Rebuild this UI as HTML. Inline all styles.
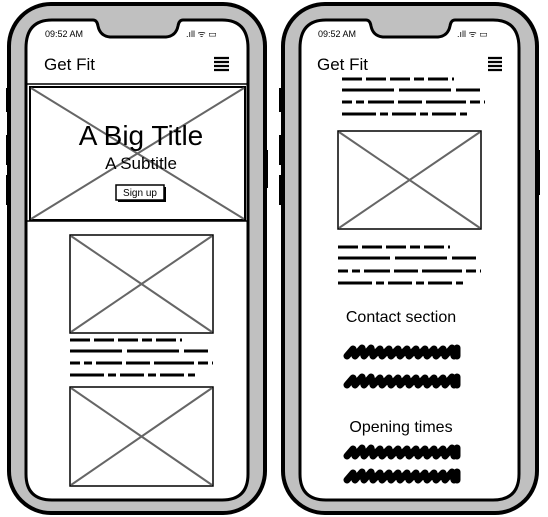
<!DOCTYPE html>
<html><head><meta charset="utf-8"><style>
html,body{margin:0;padding:0;background:#fff;width:548px;height:517px;overflow:hidden}
svg{display:block}
text{font-family:"Liberation Sans",sans-serif;fill:#000}
</style></head><body>
<svg width="548" height="517" viewBox="0 0 548 517" xmlns="http://www.w3.org/2000/svg">
<defs>
<path id="s1" d="M0 0 h112" stroke="#000" stroke-width="3" stroke-dasharray="20 4 20 4 20 4 10 4 20 4" fill="none"/>
<path id="s2" d="M0 0 h143" stroke="#000" stroke-width="3" stroke-dasharray="52 5 52 5 24 5" fill="none"/>
<path id="s3" d="M0 0 h143" stroke="#000" stroke-width="3" stroke-dasharray="10 4 8 4 26 4 24 4 40 4" fill="none"/>
<path id="s4" d="M0 0 h125" stroke="#000" stroke-width="3" stroke-dasharray="34 4 8 4 24 4 8 4 24 4" fill="none"/>
<g id="heavy">
<path d="M2 6 L8 -1 L10 6 L17 -2 L19 6 L26 -2 L28 6 L35 -1 L37 6 L44 -1 L46 6 L53 -1 L55 6 L62 -1 L64 6 L71 -1 L73 6 L80 -1 L82 6 L89 -1 L91 6 L98 -1 L100 6 L107 -2 L109 6 L112 -2 L112 6" stroke="#000" stroke-width="7" stroke-linejoin="round" stroke-linecap="round" fill="none"/>
</g>
</defs>

<!-- LEFT PHONE -->
<rect x="6" y="88" width="5" height="24" fill="#000"/>
<rect x="6" y="135" width="5" height="30" fill="#000"/>
<rect x="6" y="175" width="5" height="30" fill="#000"/>
<rect x="263" y="150" width="5" height="38" fill="#000"/>
<rect x="9" y="4" width="256" height="509" rx="42" fill="#c0c0c0" stroke="#000" stroke-width="4"/>
<path d="M52 20 H93 q4 0 5 6 q2 10 12 11 H166 q10 -1 12 -11 q1 -6 5 -6 H222 q26 0 26 28 V474 q0 26 -26 26 H52 q-26 0 -26 -26 V48 q0 -28 26 -28 Z" fill="#fff" stroke="#000" stroke-width="3"/>
<text x="45" y="37" font-size="9">09:52 AM</text>
<text x="186" y="37" font-size="9">.ıll ᯤ ▭</text>
<text x="44" y="70" font-size="17">Get Fit</text>
<g stroke="#000" stroke-width="2.2"><path d="M214 58h15M214 62h15M214 66h15M214 70h15"/></g>
<line x1="27" y1="84" x2="247" y2="84" stroke="#000" stroke-width="1.5"/>
<rect x="30" y="87" width="215" height="133" fill="#fff" stroke="#000" stroke-width="2"/>
<path d="M31 88L244 219M244 88L31 219" stroke="#666" stroke-width="2"/>
<text x="141" y="145" font-size="28" text-anchor="middle">A Big Title</text>
<text x="141" y="169" font-size="17" text-anchor="middle">A Subtitle</text>
<rect x="118" y="187" width="48" height="15" fill="#000"/>
<rect x="116" y="185" width="48" height="15" fill="#fff" stroke="#000" stroke-width="1.5"/>
<text x="140" y="196" font-size="10" text-anchor="middle">Sign up</text>
<line x1="27" y1="221" x2="247" y2="221" stroke="#000" stroke-width="1.5"/>
<rect x="70" y="235" width="143" height="98" fill="#fff" stroke="#000" stroke-width="1.5"/>
<path d="M71 236L212 332M212 236L71 332" stroke="#666" stroke-width="2"/>
<use href="#s1" x="70" y="340"/>
<use href="#s2" x="70" y="351"/>
<use href="#s3" x="70" y="363"/>
<use href="#s4" x="70" y="375"/>
<rect x="70" y="387" width="143" height="99" fill="#fff" stroke="#000" stroke-width="1.5"/>
<path d="M71 388L212 485M212 388L71 485" stroke="#666" stroke-width="2"/>

<!-- RIGHT PHONE -->
<rect x="279" y="88" width="5" height="24" fill="#000"/>
<rect x="279" y="135" width="5" height="30" fill="#000"/>
<rect x="279" y="175" width="5" height="30" fill="#000"/>
<rect x="535" y="150" width="5" height="45" fill="#000"/>
<rect x="283" y="4" width="254" height="509" rx="42" fill="#c0c0c0" stroke="#000" stroke-width="4"/>
<path d="M326 20 H366 q4 0 5 6 q2 10 12 11 H438 q10 -1 12 -11 q1 -6 5 -6 H493 q26 0 26 28 V474 q0 26 -26 26 H326 q-26 0 -26 -26 V48 q0 -28 26 -28 Z" fill="#fff" stroke="#000" stroke-width="3"/>
<text x="318" y="37" font-size="9">09:52 AM</text>
<text x="457" y="37" font-size="9">.ıll ᯤ ▭</text>
<text x="317" y="70" font-size="17">Get Fit</text>
<g stroke="#000" stroke-width="2.2"><path d="M488 58h14M488 62h14M488 66h14M488 70h14"/></g>
<use href="#s1" x="342" y="79"/>
<use href="#s2" x="342" y="90"/>
<use href="#s3" x="342" y="102"/>
<use href="#s4" x="342" y="114"/>
<rect x="338" y="131" width="143" height="98" fill="#fff" stroke="#000" stroke-width="1.5"/>
<path d="M339 132L480 228M480 132L339 228" stroke="#666" stroke-width="2"/>
<use href="#s1" x="338" y="247"/>
<use href="#s2" x="338" y="258"/>
<use href="#s3" x="338" y="271"/>
<use href="#s4" x="338" y="283"/>
<text x="401" y="322" font-size="16" text-anchor="middle">Contact section</text>
<use href="#heavy" x="345" y="350"/>
<use href="#heavy" x="345" y="379"/>
<text x="401" y="432" font-size="16" text-anchor="middle">Opening times</text>
<use href="#heavy" x="345" y="450"/>
<use href="#heavy" x="345" y="474"/>
</svg>
</body></html>
